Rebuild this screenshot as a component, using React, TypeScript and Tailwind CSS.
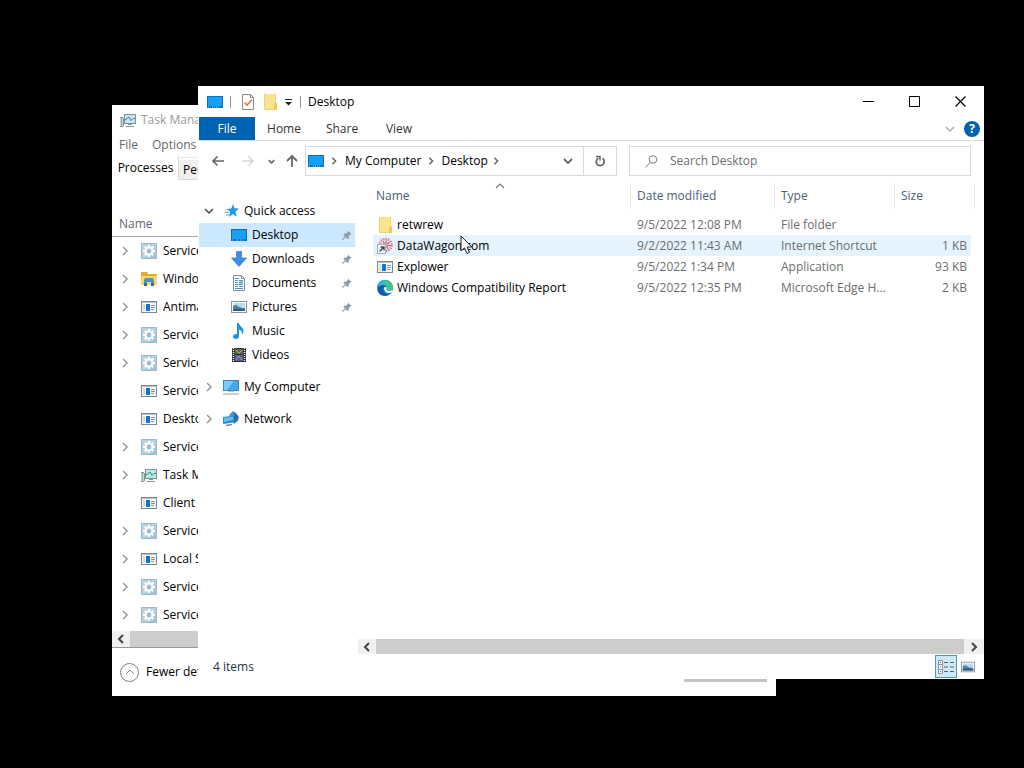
import type { ReactNode } from 'react';
import { clsx } from 'clsx';

type IconProps = { className?: string };

function MonitorIcon({ className }: IconProps) {
  return (
    <svg className={clsx('shrink-0', className)} width="16" height="14" viewBox="0 0 16 14">
      <rect x="0" y="1" width="16" height="12" fill="#0b6fc4" />
      <rect x="1" y="2" width="14" height="9" fill="#14a0f5" />
      <path d="M1 12h2M5 12h8" stroke="#8fd0fa" strokeDasharray="1 1" />
    </svg>
  );
}

function FolderIcon({ className }: IconProps) {
  return (
    <svg className={clsx('shrink-0', className)} width="16" height="16" viewBox="0 0 16 16">
      <path d="M2 0h12v10h1v6H2z" fill="#fbe48f" />
      <path d="M2.500 0v16M2 15.500h11" stroke="#f0d276" />
      <path d="M13.500 0v10" stroke="#f0d276" />
      <path d="M12 11l2-2h1v7h-3z" fill="#efcb50" />
    </svg>
  );
}

function AppIcon() {
  return (
    <svg className="shrink-0" width="16" height="16" viewBox="0 0 16 16">
      <rect x="0.500" y="2.500" width="15" height="11" fill="#f6f8f9" stroke="#7d878f" />
      <path d="M1 3.500h14" stroke="#bcc4ca" />
      <rect x="5" y="5" width="4" height="7" fill="#1673c6" />
      <path d="M3 5v7" stroke="#d5dadd" strokeWidth="2" />
      <path d="M10 6.500h4M10 8.500h4M10 10.500h3" stroke="#8b959d" />
    </svg>
  );
}

function GearIcon() {
  return (
    <svg className="shrink-0" width="16" height="16" viewBox="0 0 16 16">
      <rect width="16" height="16" fill="#a9c3d8" />
      <path d="M0 0h16v5L5 16H0z" fill="#b9d2e4" />
      <path d="M.5.5h15v15H.5z" fill="none" stroke="#9bb8cd" />
      <circle cx="8" cy="8" r="3.500" fill="none" stroke="#fff" strokeWidth="2.200" />
      <path
        d="M8 2v2.500M8 11.500V14M2 8h2.500M11.500 8H14M3.800 3.800l1.700 1.700M10.500 10.500l1.700 1.700M12.200 3.800l-1.700 1.700M5.500 10.500l-1.700 1.700"
        stroke="#fff"
        strokeWidth="2"
      />
      <circle cx="8" cy="8" r="2.200" fill="#9dbbd2" />
    </svg>
  );
}

function ExplorerIcon() {
  return (
    <svg className="shrink-0" width="17" height="16" viewBox="0 0 17 16">
      <path d="M0 1h6l1 2h9v11H0z" fill="#e2ab33" />
      <path d="M0 5h16v9H0z" fill="#fbd565" />
      <path d="M3 15V9q0-2 2-2h6q2 0 2 2v6h-3v-4H6v4z" fill="#4a95c4" />
      <path d="M3 12h3v3H3zM10 12h3v3h-3z" fill="#2f6f9e" />
    </svg>
  );
}

function TaskManagerIcon({ screen = '#b5efe3' }: { screen?: string }) {
  return (
    <svg className="shrink-0" width="16" height="16" viewBox="0 0 16 16">
      <path d="M1.500 5v9" stroke="#8fb5a2" strokeWidth="2" />
      <path d="M0 5.500h3M0 14.500h3M3.500 6v8" stroke="#8a948f" />
      <rect x="4.500" y="2.500" width="11" height="9" fill={screen} stroke="#7f9298" />
      <path d="M5 8l2-1.500L9 5l2 3.500 2-2h2" fill="none" stroke="#347d8a" />
      <path d="M8 12.500h4M6 14.500h8" stroke="#879297" />
    </svg>
  );
}

function StarIcon() {
  return (
    <svg className="shrink-0" width="14" height="14" viewBox="0 0 14 14">
      <path d="M8 0l1.500 4.300 4.500.2-3.500 3 1.200 5L8 10l-4 3 1.200-5L2 5l4.300-.4z" fill="#1e9be2" />
      <path d="M0 8.500h4M1 11h3M1.500 5.500H4" stroke="#4bb1ea" />
    </svg>
  );
}

function DownloadIcon() {
  return (
    <svg className="shrink-0" width="16" height="16" viewBox="0 0 16 16">
      <path d="M5.500.5h5V7h5L8 15.500.5 7h5z" fill="#3c8fe6" />
      <path d="M5.500.5h5V7h5L8 15.500.5 7h5z" fill="none" stroke="#2e7bd0" strokeWidth=".7" />
    </svg>
  );
}

function DocumentIcon() {
  return (
    <svg className="shrink-0" width="16" height="16" viewBox="0 0 16 16">
      <path d="M2.500.5h8l3 3v12h-11z" fill="#fff" stroke="#7c8c98" />
      <path d="M10.500.5v3h3" fill="none" stroke="#7c8c98" />
      <path d="M4 3.500h4M4 5.500h3M8 5.500h4M4 7.500h3M4 9.500h8M4 11.500h3M8 11.500h4M4 13.500h8" stroke="#4d94c0" />
      <path d="M8 6.500h4v2H8z" fill="#58a3a8" />
    </svg>
  );
}

function PictureIcon({ className }: IconProps) {
  return (
    <svg className={clsx('shrink-0', className)} width="16" height="12" viewBox="0 0 16 12">
      <rect x=".5" y=".5" width="15" height="11" fill="#fff" stroke="#8a949c" />
      <rect x="2" y="2" width="12" height="8" fill="#bcdcf4" />
      <path d="M2 5q3-2 5 0t7 2v3H2z" fill="#5682a3" />
      <path d="M2 8q6-1 12 .5V10H2z" fill="#375c78" />
    </svg>
  );
}

function MusicIcon() {
  return (
    <svg className="shrink-0" width="16" height="16" viewBox="0 0 16 16">
      <path d="M6 0h2c0 3 4.500 4 4.500 8 0 1.500-.5 2.500-1.500 3.500.5-3-1-4-3-5V13c0 1.700-1.400 3-3.300 3C3 16 2 15 2 13.800c0-1.800 2-3 4-2.600z" fill="#1e94dc" />
    </svg>
  );
}

function VideoIcon() {
  return (
    <svg className="shrink-0" width="16" height="16" viewBox="0 0 16 16">
      <rect x="1" y="1" width="14" height="14" fill="#2b2f36" />
      <path d="M2.500 1v14M13.500 1v14" stroke="#f4f4f4" strokeWidth="1.400" strokeDasharray="1 1" />
      <rect x="4" y="2" width="8" height="5" fill="#5d6450" />
      <rect x="4" y="8" width="8" height="6" fill="#4c5f9e" />
      <path d="M5 3l3 3 3-3M5 13l3-4 3 4" stroke="#bda95a" fill="none" />
    </svg>
  );
}

function ComputerIcon() {
  return (
    <svg className="shrink-0" width="16" height="16" viewBox="0 0 16 16">
      <rect x=".5" y="1.500" width="15" height="10" fill="#3fa9ea" stroke="#4087b6" />
      <path d="M1 2h10L4 11H1z" fill="#7accf7" />
      <path d="M5 12.500h6" stroke="#b9c6ce" />
      <path d="M0 15h16" stroke="#93a1aa" />
    </svg>
  );
}

function NetworkIcon() {
  return (
    <svg className="shrink-0" width="16" height="16" viewBox="0 0 16 16">
      <path d="M6 4l4-4 3 2 3 4-1 4-4 3z" fill="#4a96c9" />
      <path d="M11 1l4 4v4l-4 3z" fill="#2d6fa5" />
      <path d="M0 6l11-1.500v7L0 13z" fill="#2f8fce" />
      <path d="M1 7l9-1.300v3L1 11z" fill="#6cc0ed" />
      <path d="M3 14.500l6-1" stroke="#6d8fa6" strokeWidth="1.500" />
    </svg>
  );
}

function ShortcutIcon() {
  return (
    <svg className="shrink-0" width="16" height="16" viewBox="0 0 16 16">
      <circle cx="8.500" cy="7" r="6" fill="none" stroke="#cf7f98" strokeWidth="2.500" strokeDasharray="1.500 1" />
      <circle cx="8.500" cy="7" r="3" fill="#e3b3c1" stroke="#b9587a" strokeWidth="3" strokeDasharray="1 1.300" />
      <rect x=".5" y="6.500" width="8" height="9" fill="#f8fafc" stroke="#a9adb3" />
      <path d="M2.500 13.500l4-4M3.500 9h3.500v3.500" fill="none" stroke="#34495e" strokeWidth="1.300" />
    </svg>
  );
}

function EdgeIcon() {
  return (
    <svg className="shrink-0" width="16" height="16" viewBox="0 0 16 16">
      <circle cx="8" cy="8" r="8" fill="#1b78c8" />
      <path d="M0 7.500C.6 3 4 0 8.200 0 13 0 16 3.500 16 6.800c0 2.600-2 4-4.200 4-1.700 0-2.600-.7-2.300-1.300.8-1.300.5-3.700-2.500-4.300C4 4.700 1.500 5.500 0 7.500z" fill="#45c68f" />
      <path d="M0 7.500C.6 3 4 0 8.200 0q2 0 3 .6Q6 1 6 5.100 2 4.800 0 7.500z" fill="#2fb2d6" />
      <path d="M6 7.500c-1.500 3 .5 7.500 6 7-4 2.500-10 1-11-4C.8 8 3 5.500 6 5.300 8 5.300 9.500 6.500 9.500 8 8.500 6.500 6.700 6.300 6 7.500z" fill="#1559a5" />
      <path d="M7 8q.5-1.500 2.500-.8.500 1.300-.2 2.300-.3.800 1 1.200 2.500.7 4.700-.7l1 1q-2 2.200-4.500 2Q7.300 12.500 7 8z" fill="#fff" />
    </svg>
  );
}

function PinIcon() {
  return (
    <svg className="shrink-0" width="10" height="10" viewBox="0 0 11 11">
      <path d="M6.500.5l4 4-1.200.3-2 2.200.2 2L6 10 1.500 5.200l1.200-1.300 2 .2L6.500 2z" fill="#8f9ba5" />
      <path d="M4 7L.5 10.500" stroke="#8f9ba5" strokeWidth="1.200" />
    </svg>
  );
}

const CHEVRONS = {
  right: 'M3 1l4 4-4 4',
  left: 'M7 1L3 5l4 4',
  down: 'M1 3l4 4 4-4',
  up: 'M1 7l4-4 4 4',
};

function Chevron({ dir, size = 10, width = 1.5, className }: { dir: keyof typeof CHEVRONS; size?: number; width?: number; className?: string }) {
  return (
    <svg className={clsx('shrink-0', className)} width={size} height={size} viewBox="0 0 10 10">
      <path d={CHEVRONS[dir]} fill="none" stroke="currentColor" strokeWidth={width} />
    </svg>
  );
}

const SERVICE = { name: 'Service', icon: <GearIcon />, expandable: true };

const processes = [
  SERVICE,
  { name: 'Windows', icon: <ExplorerIcon />, expandable: true },
  { name: 'Antimalware', icon: <AppIcon />, expandable: true },
  SERVICE,
  SERVICE,
  { name: 'Services', icon: <AppIcon />, expandable: false },
  { name: 'Desktop', icon: <AppIcon />, expandable: false },
  SERVICE,
  { name: 'Task Manager', icon: <TaskManagerIcon />, expandable: true },
  { name: 'Client Server', icon: <AppIcon />, expandable: false },
  SERVICE,
  { name: 'Local Security', icon: <AppIcon />, expandable: true },
  SERVICE,
  SERVICE,
];

function TaskManager() {
  return (
    <section className="absolute top-[105px] right-[248px] bottom-[72px] left-[112px] flex flex-col overflow-hidden bg-white whitespace-nowrap">
      <header className="flex h-[30px] shrink-0 items-center gap-[5px] pl-2 text-[#999]">
        <TaskManagerIcon screen="#c9e5fb" />
        Task Manager
      </header>
      <nav className="flex h-5 shrink-0 items-center gap-[14px] pl-[7px] text-[#666]">
        <button>File</button>
        <button>Options</button>
      </nav>
      <div className="mt-[2px] flex h-[23px] shrink-0 items-end border-t border-[#e8e8e8]">
        <button className="h-6 w-[67px] border-r border-[#d9d9d9] bg-white pl-px">Processes</button>
        <button className="h-5 border-r border-b border-[#d9d9d9] bg-[#f0f0f0] px-1">Performance</button>
      </div>
      <table className="mt-9 w-full border-separate border-spacing-0">
        <thead>
          <tr>
            <th className="h-[21px] border-b border-[#a0a8b5] pl-[7px] text-left align-top font-normal text-[#5f6672]">
              Name
            </th>
          </tr>
        </thead>
        <tbody>
          {processes.map((process, i) => (
            <tr key={i}>
              <td className="h-7 p-0">
                <div className="flex items-center">
                  <span className="w-[29px] pl-2 text-[#999]">
                    {process.expandable && <Chevron dir="right" />}
                  </span>
                  <span className="w-[22px]">{process.icon}</span>
                  {process.name}
                </div>
              </td>
            </tr>
          ))}
        </tbody>
      </table>
      <div className="mt-auto flex h-[17px] shrink-0 items-center border-b border-[#999] bg-[#f0f0f0]">
        <button aria-label="Scroll left" className="flex w-[18px] justify-center text-[#444]">
          <Chevron dir="left" width={2} />
        </button>
        <div className="h-4 flex-1 bg-[#cdcdcd]" />
      </div>
      <footer className="flex h-12 shrink-0 items-center justify-between pr-[9px] pl-2">
        <button className="flex items-center gap-[7px]">
          <span className="flex size-[19px] items-center justify-center rounded-full border border-[#808080] text-[#808080]">
            <Chevron dir="up" width={1} />
          </span>
          <span className="w-[60px] overflow-hidden text-left">Fewer details</span>
        </button>
        <button aria-label="End task" disabled className="h-5 w-[83px] bg-[#c6c6c6]" />
      </footer>
    </section>
  );
}

function TitleBar() {
  return (
    <header className="flex h-[31px] shrink-0 items-center pr-[18px] pl-[9px]">
      <MonitorIcon />
      <span className="mx-[7px] h-3 w-px bg-[#909090]" />
      <button aria-label="Properties" className="ml-[2px]">
        <svg width="16" height="16" viewBox="0 0 16 16">
          <path d="M2.500.5h8l3 3v12h-11z" fill="#fff" stroke="#8a8a8a" />
          <path d="M10.500.5v3h3" fill="none" stroke="#8a8a8a" />
          <path d="M4.500 8.500L7 11l5-5.500" fill="none" stroke="#dc7250" strokeWidth="1.600" />
        </svg>
      </button>
      <button aria-label="New folder" className="ml-[6px]">
        <FolderIcon />
      </button>
      <button aria-label="Customize toolbar" className="ml-[6px]">
        <svg width="9" height="8" viewBox="0 0 9 8">
          <path d="M1 1.500h7" stroke="#222" />
          <path d="M1 4h7L4.500 7.500z" fill="#222" />
        </svg>
      </button>
      <span className="mx-[7px] h-3 w-px bg-[#909090]" />
      <h1>Desktop</h1>
      <div className="ml-auto flex items-center gap-[35px]">
        <button aria-label="Minimize">
          <svg width="11" height="11" viewBox="0 0 11 11">
            <path d="M0 5.500h11" stroke="#000" />
          </svg>
        </button>
        <button aria-label="Maximize">
          <svg width="11" height="11" viewBox="0 0 11 11">
            <path d="M.5.5h10v10H.5z" fill="none" stroke="#000" />
          </svg>
        </button>
        <button aria-label="Close">
          <svg width="11" height="11" viewBox="0 0 11 11">
            <path d="M.5.5l10 10M10.500.5l-10 10" stroke="#000" strokeWidth="1.200" />
          </svg>
        </button>
      </div>
    </header>
  );
}

function Ribbon() {
  return (
    <nav className="flex h-6 shrink-0 items-center border-b border-[#d5d6d8] pr-1 pl-px text-[#333]">
      <button className="h-full w-14 bg-[#0063b1] text-white">File</button>
      <button className="w-[58px]">Home</button>
      <button className="w-[58px]">Share</button>
      <button className="w-14">View</button>
      <button aria-label="Expand ribbon" className="ml-auto text-[#aaa]">
        <Chevron dir="down" />
      </button>
      <button aria-label="Help" className="ml-[9px] size-4 rounded-full bg-[#0063b1] text-xs leading-4 font-bold text-white">
        ?
      </button>
    </nav>
  );
}

function AddressBar() {
  return (
    <div className="flex h-10 shrink-0 items-center pr-[13px] text-[#666]">
      <div className="flex w-[107px] shrink-0 items-center pl-[13px]">
        <button aria-label="Back">
          <svg width="14" height="12" viewBox="0 0 14 12">
            <path d="M13 6H2M6.500 1.500L2 6l4.500 4.500" fill="none" stroke="#666" strokeWidth="1.600" />
          </svg>
        </button>
        <button aria-label="Forward" className="ml-4">
          <svg width="14" height="12" viewBox="0 0 14 12">
            <path d="M1 6h11M7.500 1.500L12 6l-4.500 4.500" fill="none" stroke="#d5d5d5" strokeWidth="1.400" />
          </svg>
        </button>
        <button aria-label="Recent locations" className="ml-[13px]">
          <Chevron dir="down" size={7} width={2.2} />
        </button>
        <button aria-label="Up" className="ml-[10px]">
          <svg width="14" height="14" viewBox="0 0 14 14">
            <path d="M7 13V2M2 7l5-5 5 5" fill="none" stroke="#666" strokeWidth="1.800" />
          </svg>
        </button>
      </div>
      <div className="flex h-[30px] flex-1 items-center border border-[#d9d9d9] pl-[2px]">
        <MonitorIcon />
        <Chevron dir="right" size={8} width={1.8} className="mx-[6px]" />
        <button className="ml-px text-black">My Computer</button>
        <Chevron dir="right" size={8} width={1.8} className="mx-[6px]" />
        <button className="text-black">Desktop</button>
        <Chevron dir="right" size={8} width={1.8} className="mx-1" />
        <button aria-label="Previous locations" className="mr-[10px] ml-auto">
          <Chevron dir="down" width={1.8} />
        </button>
        <button aria-label="Refresh" className="flex h-full w-[33px] items-center justify-center border-l border-[#d9d9d9]">
          <svg width="12" height="12" viewBox="0 0 12 12">
            <path d="M8.500 3.300A4 4 0 1 1 4.500 3" fill="none" stroke="#666" strokeWidth="1.700" />
            <path d="M2 1.500h4v4" fill="none" stroke="#666" strokeWidth="1.500" />
          </svg>
        </button>
      </div>
      <label className="ml-3 flex h-[30px] w-[342px] items-center gap-3 border border-[#d9d9d9] pl-[15px]">
        <svg className="shrink-0" width="13" height="13" viewBox="0 0 13 13">
          <circle cx="8" cy="4.500" r="3.800" fill="none" stroke="#777" />
          <path d="M5.300 7.300L.5 12.500" stroke="#777" />
        </svg>
        <input
          type="search"
          aria-label="Search Desktop"
          placeholder="Search Desktop"
          className="min-w-0 flex-1 outline-none placeholder:text-[#6d6d6d]"
        />
      </label>
    </div>
  );
}

function TreeGroup({ icon, label, open }: { icon: ReactNode; label: string; open?: boolean }) {
  return (
    <a href="#" className="flex h-6 items-center pl-[5px]">
      <Chevron dir={open ? 'down' : 'right'} className={open ? 'text-[#444]' : 'text-[#999]'} />
      <span className="ml-[9px] flex w-[21px] justify-start">{icon}</span>
      {label}
    </a>
  );
}

const quickAccess = [
  { label: 'Desktop', icon: <MonitorIcon />, pinned: true, selected: true },
  { label: 'Downloads', icon: <DownloadIcon />, pinned: true },
  { label: 'Documents', icon: <DocumentIcon />, pinned: true },
  { label: 'Pictures', icon: <PictureIcon />, pinned: true },
  { label: 'Music', icon: <MusicIcon /> },
  { label: 'Videos', icon: <VideoIcon /> },
];

function Sidebar() {
  return (
    <nav className="w-[157px] shrink-0 pt-[18px] pl-px">
      <TreeGroup icon={<span className="pl-[2px]"><StarIcon /></span>} label="Quick access" open />
      {quickAccess.map((item) => (
        <a
          key={item.label}
          href="#"
          className={clsx('flex h-6 items-center gap-[5px] pr-[3px] pl-8', item.selected && 'bg-[#cce8ff]')}
        >
          {item.icon}
          <span className="flex-1">{item.label}</span>
          {item.pinned && <PinIcon />}
        </a>
      ))}
      <div className="mt-2 space-y-2">
        <TreeGroup icon={<ComputerIcon />} label="My Computer" />
        <TreeGroup icon={<NetworkIcon />} label="Network" />
      </div>
    </nav>
  );
}

const files = [
  { name: 'retwrew', icon: <FolderIcon />, date: '9/5/2022 12:08 PM', type: 'File folder', size: '' },
  { name: 'DataWagon.com', icon: <ShortcutIcon />, date: '9/2/2022 11:43 AM', type: 'Internet Shortcut', size: '1 KB', hovered: true },
  { name: 'Explower', icon: <AppIcon />, date: '9/5/2022 1:34 PM', type: 'Application', size: '93 KB' },
  { name: 'Windows Compatibility Report', icon: <EdgeIcon />, date: '9/5/2022 12:35 PM', type: 'Microsoft Edge H...', size: '2 KB' },
];

function FileTable() {
  return (
    <div className="flex-1 pr-[9px] pl-[18px]">
      <Chevron dir="up" className="mx-[122px] -mb-2 text-[#777]" width={1.2} />
      <table className="w-full table-fixed border-separate border-spacing-0">
        <thead>
          <tr className="text-left text-[#4c607a]">
            <th className="h-[26px] border-r border-[#e5e5e5] pl-[3px] font-normal">Name</th>
            <th className="w-36 border-r border-[#e5e5e5] pl-[6px] font-normal">Date modified</th>
            <th className="w-[120px] border-r border-[#e5e5e5] pl-[6px] font-normal">Type</th>
            <th className="w-20 border-r border-[#e5e5e5] pl-[6px] font-normal">Size</th>
          </tr>
        </thead>
        <tbody className="before:block before:h-[5px]">
          {files.map((file) => (
            <tr key={file.name} className={clsx('text-[#6d6d6d]', file.hovered && 'bg-[#e5f3ff]')}>
              <td className="h-[21px] p-0 pl-1">
                <div className="flex items-center gap-1 text-black">
                  {file.icon}
                  {file.name}
                </div>
              </td>
              <td className="p-0 pl-[6px]">{file.date}</td>
              <td className="p-0 pl-[6px]">{file.type}</td>
              <td className="border-r-4 border-white p-0 pr-1 text-right">{file.size}</td>
            </tr>
          ))}
        </tbody>
      </table>
    </div>
  );
}

function FileExplorer() {
  return (
    <section className="absolute top-[86px] right-10 bottom-[89px] left-[198px] flex flex-col overflow-hidden bg-white whitespace-nowrap">
      <TitleBar />
      <Ribbon />
      <AddressBar />
      <div className="flex min-h-0 flex-1">
        <Sidebar />
        <main className="flex min-w-0 flex-1 flex-col">
          <FileTable />
          <div className="ml-[3px] flex h-[15px] shrink-0 items-center bg-[#f0f0f0] text-[#444]">
            <button aria-label="Scroll left" className="flex w-[18px] justify-center">
              <Chevron dir="left" width={2} />
            </button>
            <div className="h-full flex-1 bg-[#cdcdcd]" />
            <button aria-label="Scroll right" className="flex w-5 justify-center">
              <Chevron dir="right" width={2} />
            </button>
          </div>
        </main>
      </div>
      <footer className="flex h-[25px] shrink-0 items-center pr-[9px] pl-[15px] text-[#1e3250]">
        4 items
        <button aria-label="Details view" className="ml-auto flex h-[23px] w-[22px] items-center justify-center border border-[#3c9bd0] bg-[#cde9f7]">
          <svg width="18" height="14" viewBox="0 0 18 14">
            <path d="M1.500.5h4v13h-4zM1.500 4.500h4M1.500 9.500h4" fill="#fff" stroke="#8b9499" />
            <path d="M3 2.500h1M3 7h1M3 11.500h1M7 2.500h4M7 7h4M7 11.500h4M13 2.500h4M13 7h4M13 11.500h4" stroke="#58656e" />
          </svg>
        </button>
        <button aria-label="Large icons view" className="ml-1">
          <PictureIcon className="w-[14px]" />
        </button>
      </footer>
    </section>
  );
}

export default function App() {
  return (
    <div className="relative h-screen min-h-[768px] overflow-hidden bg-black font-['Open_Sans','Noto_Sans',sans-serif] text-xs text-black">
      <TaskManager />
      <FileExplorer />
      <svg className="absolute top-[235px] left-[460px]" width="13" height="20" viewBox="0 0 13 20">
        <path d="M1 1v15l3.500-3.200L7 18.500l2.500-1.200L7 12h4.800z" fill="#fff" stroke="#222" />
      </svg>
    </div>
  );
}
